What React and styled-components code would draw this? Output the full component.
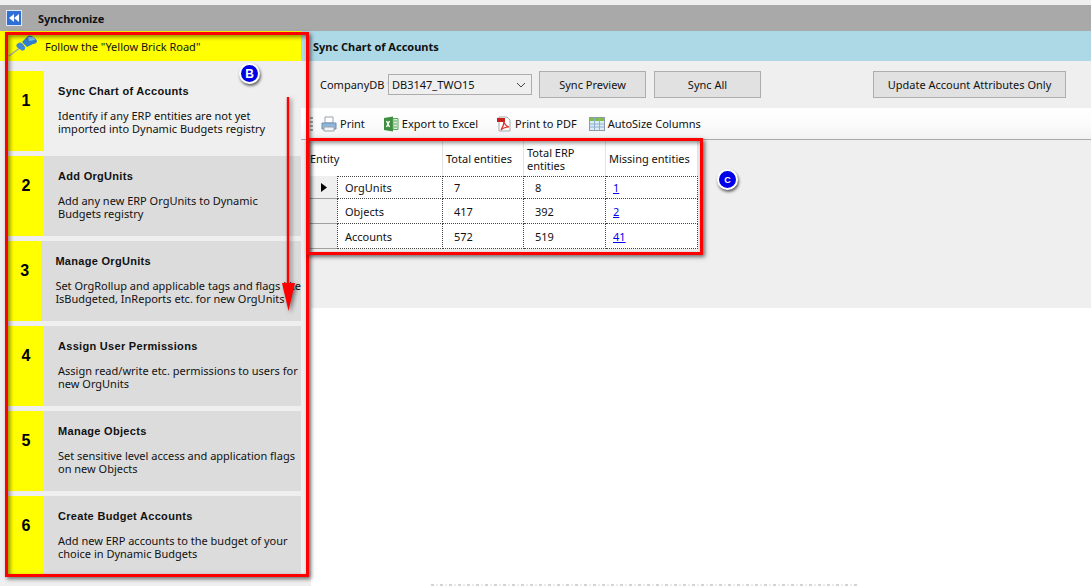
import React from "react";
import styled, { createGlobalStyle } from "styled-components";

const steps = [
  { n: 1, title: "Sync Chart of Accounts", text: ["Identify if any ERP entities are not yet", "imported into Dynamic Budgets registry"], active: true },
  { n: 2, title: "Add OrgUnits", text: ["Add any new ERP OrgUnits to Dynamic", "Budgets registry"] },
  { n: 3, title: "Manage OrgUnits", text: ["Set OrgRollup and applicable tags and flags like", "IsBudgeted, InReports etc. for new OrgUnits"] },
  { n: 4, title: "Assign User Permissions", text: ["Assign read/write etc. permissions to users for", "new OrgUnits"] },
  { n: 5, title: "Manage Objects", text: ["Set sensitive level access and application flags", "on new Objects"] },
  { n: 6, title: "Create Budget Accounts", text: ["Add new ERP accounts to the budget of your", "choice in Dynamic Budgets"] },
];

const rows = [
  { name: "OrgUnits", total: "7", erp: "8", missing: "1", current: true },
  { name: "Objects", total: "417", erp: "392", missing: "2" },
  { name: "Accounts", total: "572", erp: "519", missing: "41" },
];

const GlobalStyle = createGlobalStyle`
  html, body {
    margin: 0;
    padding: 0;
    background: #fff;
  }
  * {
    box-sizing: border-box;
  }
`;

const Page = styled.div`
  position: relative;
  width: 1091px;
  height: 586px;
  overflow: hidden;
  padding-top: 5px;
  background: #efefef;
  color: #111;
  font-family: "Noto Sans", "Liberation Sans", sans-serif;
  font-size: 11px;
`;

const TitleBar = styled.div`
  display: flex;
  align-items: center;
  height: 26px;
  padding-left: 6px;
  background: #a9a9a9;
`;

const BackButton = styled.div`
  display: flex;
  width: 16px;
  height: 16px;
`;

const TitleText = styled.div`
  margin-left: 16px;
  font-weight: 700;
`;

const Body = styled.div`
  display: grid;
  grid-template-columns: 301px 1fr;
  height: 555px;
`;

const Wizard = styled.div`
  display: flex;
  flex-direction: column;
`;

const WizardHead = styled.div`
  display: flex;
  align-items: center;
  height: 30px;
  padding-left: 8px;
  background: #ffff00;
`;

const PinWrap = styled.div`
  display: flex;
  width: 30px;
  margin-right: 7px;
`;

const StepList = styled.div`
  display: flex;
  flex-direction: column;
  gap: 5px;
  padding: 10px 0 0 8px;
`;

const Step = styled.div`
  display: flex;
  height: 80px;
  background: ${(props) => (props.$active ? "#efefef" : "#dcdcdc")};
`;

const StepNumber = styled.div`
  width: 36px;
  padding-top: 21px;
  background: #ffff00;
  text-align: center;
  font-family: "Liberation Sans", sans-serif;
  font-size: 16px;
  line-height: 18px;
  font-weight: 700;
  color: #000;
`;

const StepBody = styled.div`
  padding: 13px 0 0 14px;
`;

const StepTitle = styled.div`
  margin-bottom: 11px;
  font-family: "Liberation Sans", sans-serif;
  font-size: 11px;
  line-height: 14px;
  font-weight: 700;
  letter-spacing: 0.3px;
`;

const StepLine = styled.div`
  line-height: 13px;
  white-space: nowrap;
`;

const Content = styled.div`
  display: flex;
  flex-direction: column;
`;

const ContentHead = styled.div`
  display: flex;
  align-items: center;
  height: 30px;
  padding-left: 12px;
  background: #add8e6;
  font-weight: 700;
`;

const Controls = styled.div`
  display: flex;
  align-items: center;
  height: 47px;
  padding: 0 25px 0 19px;
`;

const FieldLabel = styled.label`
  width: 68px;
  white-space: nowrap;
`;

const Select = styled.div`
  display: flex;
  align-items: center;
  justify-content: space-between;
  width: 144px;
  height: 21px;
  padding: 0 5px 0 3px;
  margin-right: 7px;
  border: 1px solid #adadad;
  background: #efefef;
`;

const Button = styled.div`
  display: flex;
  align-items: center;
  justify-content: center;
  width: ${(props) => props.$width}px;
  height: 27px;
  margin-left: ${(props) => props.$gap || 0}px;
  border: 1px solid #adadad;
  background: #e1e1e1;
`;

const Toolbar = styled.div`
  display: flex;
  align-items: center;
  height: 32px;
  padding-left: 9px;
  border-bottom: 1px solid #a9a9a9;
  background: linear-gradient(#ffffff, #fbfbfb 55%, #f2f2f2);
`;

const Grip = styled.div`
  width: 3px;
  height: 14px;
  margin-right: 8px;
  background: repeating-linear-gradient(#a8a8a8 0 2px, transparent 2px 4px);
`;

const ToolItem = styled.div`
  display: flex;
  align-items: center;
  gap: 3px;
  margin-right: ${(props) => props.$gap}px;
  white-space: nowrap;
`;

const GridArea = styled.div`
  height: 168px;
  padding: 1px 0 0 9px;
`;

const DataGrid = styled.div`
  display: grid;
  grid-template-columns: 27px 106px 81px 82px 92px;
  grid-template-rows: 35px 23px 25px 25px;
  width: 388px;
`;

const HeadCell = styled.div`
  grid-column: ${(props) => (props.$wide ? "span 2" : "auto")};
  display: flex;
  align-items: center;
  padding-left: ${(props) => (props.$wide ? 0 : 3)}px;
  border-right: 1px solid #e3e3e3;
  background: #fff;
  line-height: 13px;
`;

const RowHead = styled.div`
  display: flex;
  align-items: center;
  justify-content: center;
  border-bottom: 1px solid #a0a0a0;
  background: #efefef;
`;

const Cell = styled.div`
  display: flex;
  align-items: center;
  padding-left: ${(props) => (props.$first ? 7 : 11)}px;
  border-right: 1px dotted #444;
  border-bottom: 1px dotted #444;
  border-left: ${(props) => (props.$first ? "1px dotted #444" : "none")};
  border-top: ${(props) => (props.$top ? "1px dotted #444" : "none")};
  background: #fff;
`;

const LinkCell = styled(Cell)`
  padding-left: 7px;
  color: #0000ee;
  text-decoration: underline;
`;

const Blank = styled.div`
  flex: 1;
  display: flex;
  align-items: flex-end;
  margin-left: 10px;
  padding-left: 120px;
  background: #fff;
`;

const CutOffLine = styled.div`
  width: 428px;
  height: 2px;
  background: repeating-linear-gradient(90deg, #d4d4d4 0 3px, #fff 3px 5px, #ececec 5px 7px, #fff 7px 9px);
`;

const RedBox = styled.div`
  position: absolute;
  left: ${(props) => props.$x}px;
  top: ${(props) => props.$y}px;
  width: ${(props) => props.$w}px;
  height: ${(props) => props.$h}px;
  border: 3px solid #ff0000;
  box-shadow: 2px 2px 4px rgba(0, 0, 0, 0.55), inset 2px 2px 4px rgba(0, 0, 0, 0.45);
`;

const Badge = styled.div`
  position: absolute;
  left: ${(props) => props.$x}px;
  top: ${(props) => props.$y}px;
  display: flex;
  align-items: center;
  justify-content: center;
  width: 21px;
  height: 21px;
  border: 2px solid #fff;
  border-radius: 50%;
  background: #0000e6;
  box-shadow: 1px 2px 3px rgba(0, 0, 0, 0.6);
  color: #fff;
  font-family: "Liberation Sans", sans-serif;
  font-size: ${(props) => props.$size}px;
  font-weight: 700;
`;

const ArrowOverlay = styled.svg`
  position: absolute;
  left: 278px;
  top: 94px;
  filter: drop-shadow(2px 2px 2px rgba(0, 0, 0, 0.5));
`;

const BackIcon = () => (
  <svg width="16" height="16" viewBox="0 0 16 16">
    <rect x="0.5" y="0.5" width="15" height="15" fill="#2f6fd6" stroke="#dfe8f7" />
    <path d="M8 4v8L3 8zM13 4v8L8 8z" fill="#fff" />
  </svg>
);

const PinIcon = () => (
  <svg width="30" height="24" viewBox="0 0 30 24">
    <path d="M1 22 L13 13" stroke="#9aa6b2" strokeWidth="1.4" />
    <path d="M9 10 C11 8 13 8 15 10 L17 13 C18 15 15 18 13 16 L10 14 C8 13 8 11 9 10z" fill="#3f8ad0" />
    <path d="M14 8 L20 2 C22 0 28 4 29 7 C29 9 27 10 25 10 L19 13z" fill="#2f7fcb" />
    <path d="M20 3 L26 3 L27 6 L21 7z" fill="#7dc0ee" />
  </svg>
);

const PrintIcon = () => (
  <svg width="16" height="16" viewBox="0 0 16 16">
    <path d="M4 1h8v6H4z" fill="#fff" stroke="#9aa3ad" />
    <path d="M1 7h14v6H1z" fill="#8fb6dc" stroke="#6c8fb3" />
    <path d="M3 11h10v4H3z" fill="#f5f5f5" stroke="#9aa3ad" />
  </svg>
);

const ExcelIcon = () => (
  <svg width="16" height="16" viewBox="0 0 16 16">
    <path d="M1 2l9-1.5v15L1 14z" fill="#3e8f3e" />
    <path d="M10 2.5h5v11h-5z" fill="#dcefdc" stroke="#5ca45c" />
    <path d="M3.5 5l3 6M6.5 5l-3 6" stroke="#fff" strokeWidth="1.4" />
    <path d="M11 5h3M11 8h3M11 11h3" stroke="#5ca45c" />
  </svg>
);

const PdfIcon = () => (
  <svg width="16" height="16" viewBox="0 0 16 16">
    <path d="M3 1h8l3 3v11H3z" fill="#fff" stroke="#a8a8a8" />
    <path d="M1 2h8v4H1z" fill="#c8211c" />
    <path d="M5 14c2-3 3-6 3-9 0 3 2 5 5 6-3 0-6 1-8 3z" fill="none" stroke="#d8322a" strokeWidth="1.2" />
  </svg>
);

const TableIcon = () => (
  <svg width="16" height="16" viewBox="0 0 16 16">
    <rect x="0.5" y="1.5" width="15" height="13" fill="#dcebf7" stroke="#8e9aa5" />
    <rect x="1" y="2" width="14" height="3" fill="#7cc04a" />
    <path d="M1 8h14M1 11h14M5.5 2v12M10.5 2v12" stroke="#8fb0cc" />
  </svg>
);

const ChevronIcon = () => (
  <svg width="10" height="6" viewBox="0 0 10 6">
    <path d="M1 1l4 4 4-4" fill="none" stroke="#444" />
  </svg>
);

const RowPointer = () => (
  <svg width="6" height="9" viewBox="0 0 6 9">
    <path d="M0 0l6 4.5L0 9z" fill="#000" />
  </svg>
);

const App = () => {
  return (
    <Page>
      <GlobalStyle />
      <TitleBar>
        <BackButton>
          <BackIcon />
        </BackButton>
        <TitleText>Synchronize</TitleText>
      </TitleBar>
      <Body>
        <Wizard>
          <WizardHead>
            <PinWrap>
              <PinIcon />
            </PinWrap>
            Follow the "Yellow Brick Road"
          </WizardHead>
          <StepList>
            {steps.map((step) => (
              <Step key={step.n} $active={step.active}>
                <StepNumber>{step.n}</StepNumber>
                <StepBody>
                  <StepTitle>{step.title}</StepTitle>
                  {step.text.map((line) => (
                    <StepLine key={line}>{line}</StepLine>
                  ))}
                </StepBody>
              </Step>
            ))}
          </StepList>
        </Wizard>
        <Content>
          <ContentHead>Sync Chart of Accounts</ContentHead>
          <Controls>
            <FieldLabel>CompanyDB *</FieldLabel>
            <Select>
              DB3147_TWO15
              <ChevronIcon />
            </Select>
            <Button $width={107}>Sync Preview</Button>
            <Button $width={107} $gap={8}>Sync All</Button>
            <Button $width={193} $gap={112}>Update Account Attributes Only</Button>
          </Controls>
          <Toolbar>
            <Grip />
            <ToolItem $gap={18}>
              <PrintIcon />
              Print
            </ToolItem>
            <ToolItem $gap={18}>
              <ExcelIcon />
              Export to Excel
            </ToolItem>
            <ToolItem $gap={12}>
              <PdfIcon />
              Print to PDF
            </ToolItem>
            <ToolItem $gap={0}>
              <TableIcon />
              AutoSize Columns
            </ToolItem>
          </Toolbar>
          <GridArea>
            <DataGrid>
              <HeadCell $wide>Entity</HeadCell>
              <HeadCell>Total entities</HeadCell>
              <HeadCell>
                Total ERP
                <br />
                entities
              </HeadCell>
              <HeadCell>Missing entities</HeadCell>
              {rows.map((row) => (
                <React.Fragment key={row.name}>
                  <RowHead>{row.current && <RowPointer />}</RowHead>
                  <Cell $first $top={row.current}>{row.name}</Cell>
                  <Cell $top={row.current}>{row.total}</Cell>
                  <Cell $top={row.current}>{row.erp}</Cell>
                  <LinkCell $top={row.current}>{row.missing}</LinkCell>
                </React.Fragment>
              ))}
            </DataGrid>
          </GridArea>
          <Blank>
            <CutOffLine />
          </Blank>
        </Content>
      </Body>

      <RedBox $x={5} $y={32} $w={304} $h={545} />
      <RedBox $x={306} $y={138} $w={397} $h={117} />
      <Badge $x={239} $y={63} $size={12}>B</Badge>
      <Badge $x={717} $y={169} $size={9}>C</Badge>
      <ArrowOverlay width="20" height="220" viewBox="0 0 20 220">
        <path d="M10 3V200" stroke="#ff0000" strokeWidth="2.4" />
        <path d="M4 189L17 189L10.500 217z" fill="#ff0000" />
      </ArrowOverlay>
    </Page>
  );
};

export default App;
